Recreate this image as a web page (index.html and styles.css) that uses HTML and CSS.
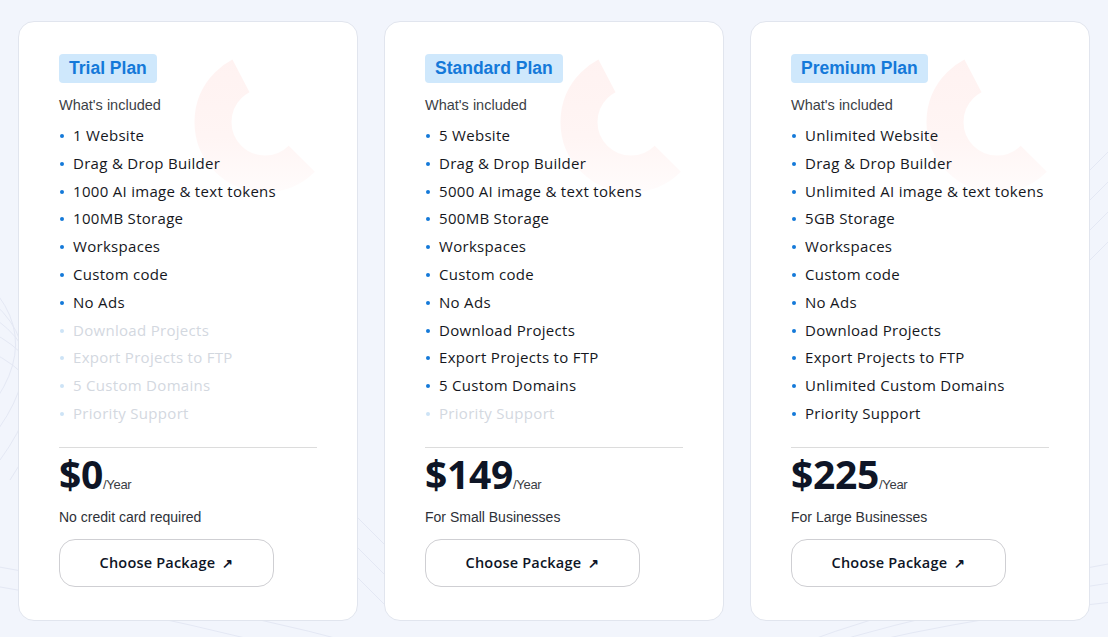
FILE: index.html
```html
<!DOCTYPE html>
<html>
<head>
<meta charset="utf-8">
<link rel="stylesheet" href="styles.css">
</head>
<body>
<svg class="bg-lines" width="1108" height="637" viewBox="0 0 1108 637" aria-hidden="true">
  <defs>
    <linearGradient id="fade" x1="0" y1="0" x2="1" y2="1">
      <stop offset="0" stop-color="#fff2f1"/>
      <stop offset="0.6" stop-color="#fff5f4"/>
      <stop offset="1" stop-color="#fffcfc"/>
    </linearGradient>
  </defs>
  <g fill="none" stroke="#e4e8f4" stroke-width="1">
    <path d="M-40 260 Q 60 330 -20 420"/>
    <path d="M-40 280 Q 70 340 -10 440"/>
    <path d="M-40 300 Q 80 350 0 460"/>
    <path d="M-40 320 Q 90 360 10 480"/>
    <path d="M-40 340 Q 90 380 20 500"/>
    <path d="M-40 560 Q 200 600 420 660"/>
    <path d="M-40 580 Q 200 620 400 680"/>
    <path d="M340 500 L 400 560"/>
    <path d="M340 530 L 400 590"/>
    <path d="M340 560 L 400 620"/>
    <path d="M1060 200 L 1130 130"/>
    <path d="M1060 230 L 1130 160"/>
    <path d="M1060 260 L 1130 190"/>
    <path d="M1060 290 L 1130 220"/>
    <path d="M760 660 Q 900 600 1130 560"/>
    <path d="M780 660 Q 920 610 1130 580"/>
    <path d="M800 660 Q 940 620 1130 600"/>
  </g>
</svg>
<main class="plans">
  <section class="card">
    <svg class="ring" width="338" height="220" viewBox="0 0 338 220" aria-hidden="true"><circle cx="246" cy="100" r="52" fill="none" stroke="url(#fade)" stroke-width="37" stroke-dasharray="179 400" transform="rotate(45 246 100)"/></svg>
    <div class="badge">Trial Plan</div>
    <p class="inc">What's included</p>
    <ul class="feats">
      <li>1 Website</li>
      <li>Drag &amp; Drop Builder</li>
      <li>1000 AI image &amp; text tokens</li>
      <li>100MB Storage</li>
      <li>Workspaces</li>
      <li>Custom code</li>
      <li>No Ads</li>
      <li class="off">Download Projects</li>
      <li class="off">Export Projects to FTP</li>
      <li class="off">5 Custom Domains</li>
      <li class="off">Priority Support</li>
    </ul>
    <hr class="div">
    <div class="price"><span class="amt">$0</span><span class="per">/Year</span></div>
    <p class="note">No credit card required</p>
    <button class="btn">Choose Package <span class="arr">↗</span></button>
  </section>
  <section class="card">
    <svg class="ring" width="338" height="220" viewBox="0 0 338 220" aria-hidden="true"><circle cx="246" cy="100" r="52" fill="none" stroke="url(#fade)" stroke-width="37" stroke-dasharray="179 400" transform="rotate(45 246 100)"/></svg>
    <div class="badge">Standard Plan</div>
    <p class="inc">What's included</p>
    <ul class="feats">
      <li>5 Website</li>
      <li>Drag &amp; Drop Builder</li>
      <li>5000 AI image &amp; text tokens</li>
      <li>500MB Storage</li>
      <li>Workspaces</li>
      <li>Custom code</li>
      <li>No Ads</li>
      <li>Download Projects</li>
      <li>Export Projects to FTP</li>
      <li>5 Custom Domains</li>
      <li class="off">Priority Support</li>
    </ul>
    <hr class="div">
    <div class="price"><span class="amt">$149</span><span class="per">/Year</span></div>
    <p class="note">For Small Businesses</p>
    <button class="btn">Choose Package <span class="arr">↗</span></button>
  </section>
  <section class="card">
    <svg class="ring" width="338" height="220" viewBox="0 0 338 220" aria-hidden="true"><circle cx="246" cy="100" r="52" fill="none" stroke="url(#fade)" stroke-width="37" stroke-dasharray="179 400" transform="rotate(45 246 100)"/></svg>
    <div class="badge">Premium Plan</div>
    <p class="inc">What's included</p>
    <ul class="feats">
      <li>Unlimited Website</li>
      <li>Drag &amp; Drop Builder</li>
      <li>Unlimited AI image &amp; text tokens</li>
      <li>5GB Storage</li>
      <li>Workspaces</li>
      <li>Custom code</li>
      <li>No Ads</li>
      <li>Download Projects</li>
      <li>Export Projects to FTP</li>
      <li>Unlimited Custom Domains</li>
      <li>Priority Support</li>
    </ul>
    <hr class="div">
    <div class="price"><span class="amt">$225</span><span class="per">/Year</span></div>
    <p class="note">For Large Businesses</p>
    <button class="btn">Choose Package <span class="arr">↗</span></button>
  </section>
</main>
</body>
</html>
```
FILE: styles.css
```css
html, body {
  margin: 0;
  padding: 0;
}
body {
  background: #f2f5fc;
  width: 1108px;
  height: 637px;
  overflow: hidden;
  position: relative;
  font-family: "Open Sans", "Noto Sans", sans-serif;
  color: #14161c;
}
.bg-lines {
  position: absolute;
  left: 0;
  top: 0;
}
.plans {
  position: relative;
  display: flex;
  gap: 26px;
  padding: 21px 0 0 18px;
}
.card {
  position: relative;
  box-sizing: border-box;
  width: 340px;
  height: 600px;
  background: #fff;
  border: 1px solid #e1e5ee;
  border-radius: 16px;
  padding: 32px 40px 0 40px;
  display: flex;
  flex-direction: column;
  align-items: flex-start;
}
.ring {
  position: absolute;
  left: 0;
  top: 0;
}
.badge {
  position: relative;
  background: #cfe8fc;
  color: #1479d9;
  font-family: "Liberation Sans", Arial, sans-serif;
  font-weight: 700;
  font-size: 17.5px;
  line-height: 29px;
  height: 29px;
  padding: 0 10px;
  border-radius: 4px;
}
.inc {
  position: relative;
  margin: 14px 0 0 0;
  font-family: "Liberation Sans", Arial, sans-serif;
  font-size: 14.5px;
  line-height: 17px;
  color: #3c3f46;
}
.feats {
  position: relative;
  list-style: none;
  margin: 8px 0 0 0;
  padding: 0;
}
.feats li {
  position: relative;
  font-size: 15px;
  line-height: 27.8px;
  height: 27.8px;
  padding-left: 14px;
  letter-spacing: 0.3px;
  color: #15171d;
}
.feats li::before {
  content: "";
  position: absolute;
  left: 1px;
  top: 12px;
  width: 4px;
  height: 4px;
  border-radius: 50%;
  background: #1479d9;
}
.feats li.off {
  color: #d3d8df;
}
.feats li.off::before {
  background: #cde3f6;
}
.div {
  align-self: stretch;
  margin: 19px 0 0 0;
  border: 0;
  border-top: 1px solid #dcdcdc;
  height: 0;
}
.price {
  display: flex;
  align-items: baseline;
  margin-top: 4px;
  height: 44px;
}
.amt {
  font-size: 39px;
  font-weight: 700;
  color: #0e1526;
  letter-spacing: -0.3px;
  line-height: 44px;
}
.per {
  font-family: "Liberation Sans", Arial, sans-serif;
  font-size: 13px;
  color: #3a3d44;
  letter-spacing: -0.3px;
}
.note {
  margin: 13px 0 0 0;
  font-family: "Liberation Sans", Arial, sans-serif;
  font-size: 14px;
  line-height: 17px;
  color: #2e3138;
}
.btn {
  margin-top: 13px;
  width: 215px;
  height: 48px;
  background: #fff;
  border: 1px solid #cfcfd3;
  border-radius: 16px;
  font-family: "Open Sans", "Noto Sans", sans-serif;
  font-weight: 600;
  font-size: 14.5px;
  color: #0e1526;
  letter-spacing: 0.2px;
  display: flex;
  align-items: center;
  justify-content: center;
  gap: 7px;
  padding: 0;
}
.arr {
  font-size: 13px;
  font-weight: 700;
}
```
